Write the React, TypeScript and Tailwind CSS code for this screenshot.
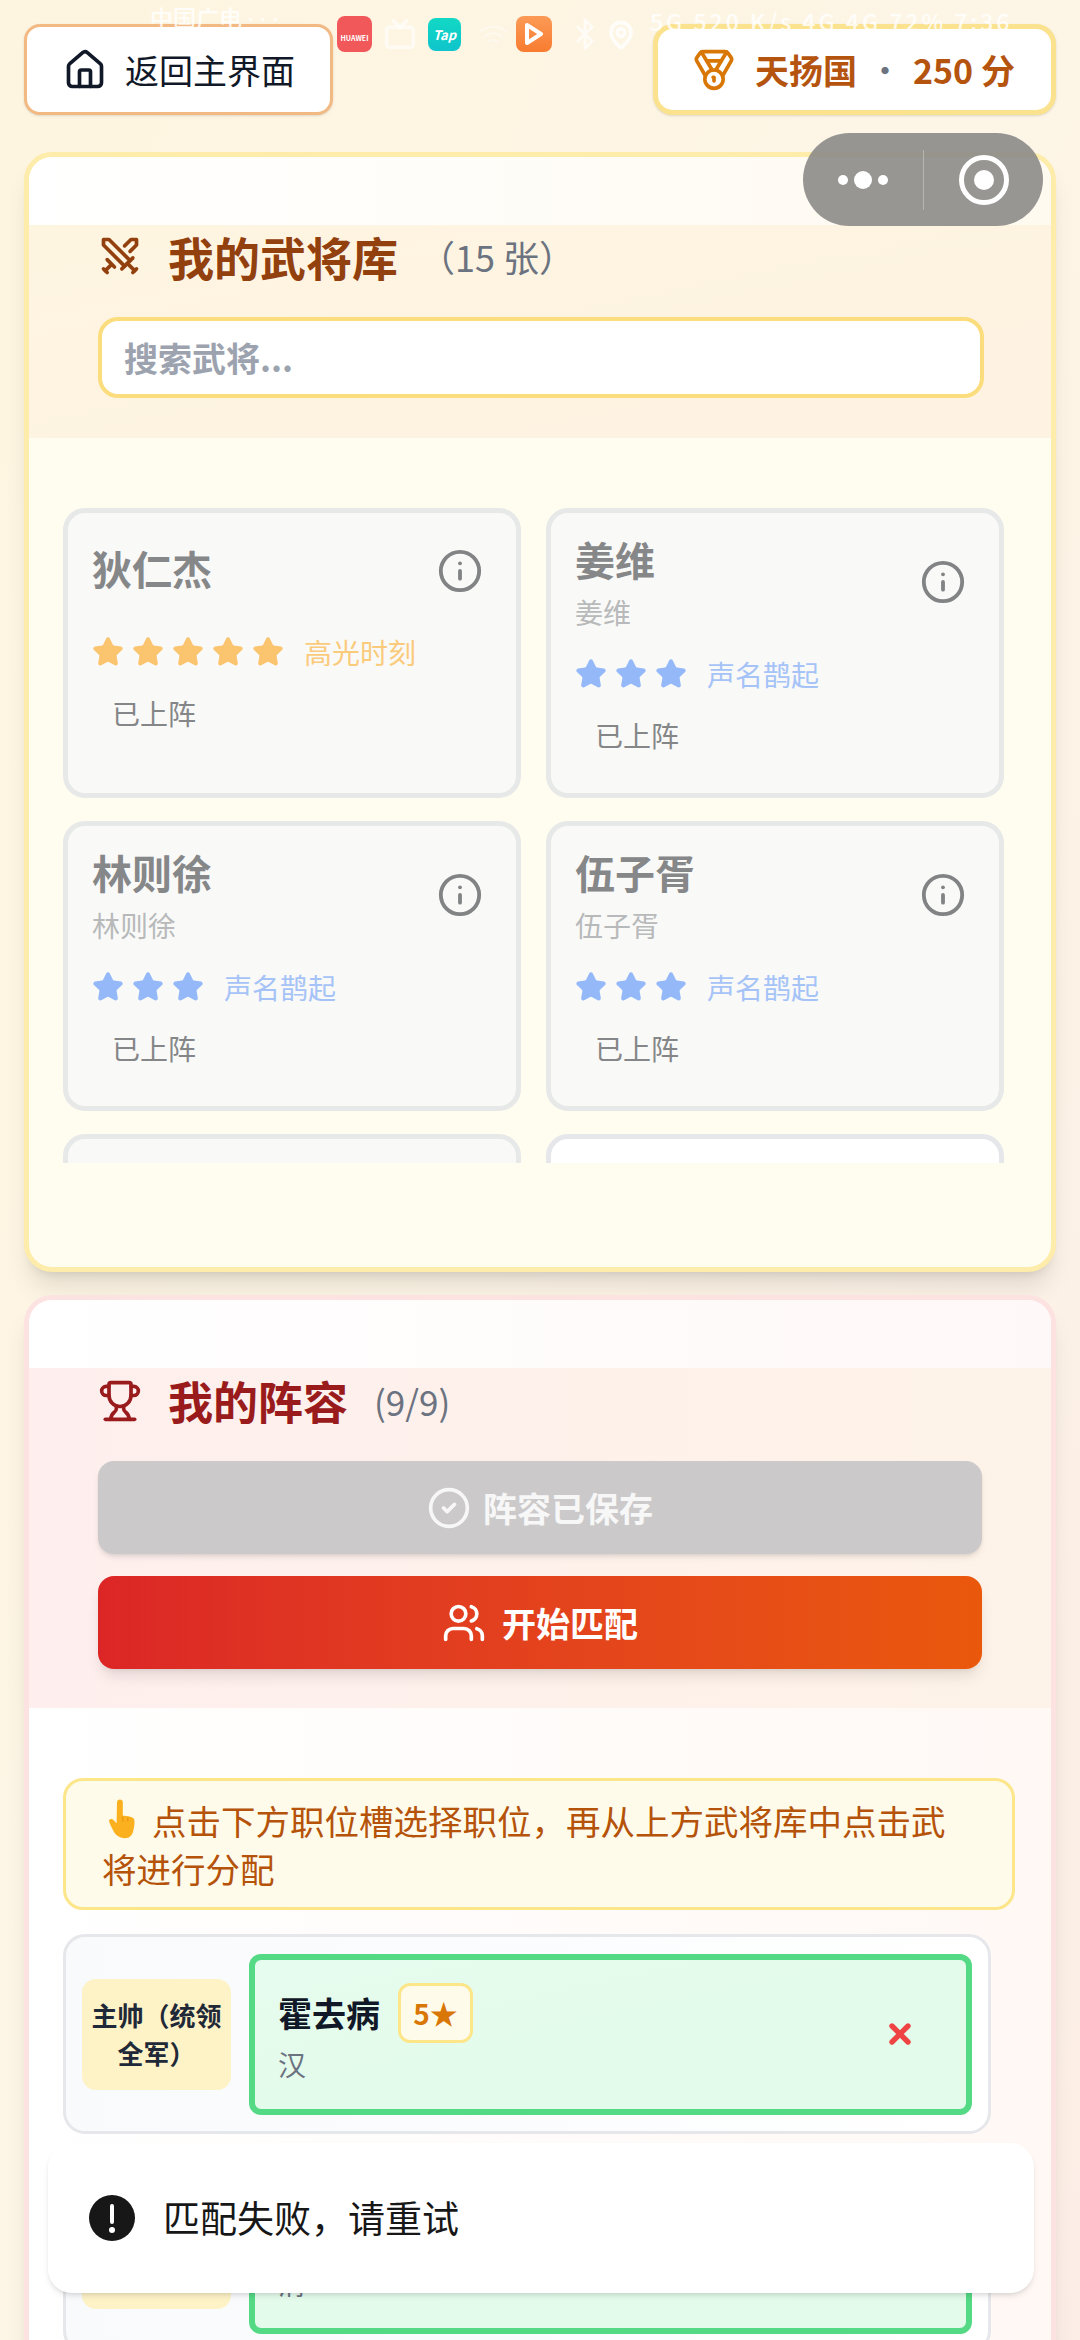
import { Home, Medal, Swords, Info, Star, Trophy, CircleCheck, Users, X, Tv, Wifi, Bluetooth, MapPin } from 'lucide-react'

const fontStack = { fontFamily: '"Noto Sans CJK SC", sans-serif' }

const heroes = [
  { name: '狄仁杰', sub: '', stars: 5, tier: '高光时刻' },
  { name: '姜维', sub: '姜维', stars: 3, tier: '声名鹊起' },
  { name: '林则徐', sub: '林则徐', stars: 3, tier: '声名鹊起' },
  { name: '伍子胥', sub: '伍子胥', stars: 3, tier: '声名鹊起' },
]

function HeroCard({ hero }: { hero: (typeof heroes)[number] }) {
  const gold = hero.stars === 5
  return (
    <div className="h-[290px] rounded-[22px] border-[5px] border-[#e7e8e8] bg-[#f9f9f8] pl-[24px] pr-[33px] pt-[20px]">
      <div className="flex items-center justify-between min-h-[76px]">
        <div>
          <div className="text-[40px] leading-[52px] pb-[6px] font-bold text-[#868788]">{hero.name}</div>
          {hero.sub && <div className="mt-[2px] text-[28px] leading-[38px] text-[#b8b9ba]">{hero.sub}</div>}
        </div>
        <Info size={46} strokeWidth={2} className="text-[#828384]" />
      </div>
      <div className="flex items-center mt-[23px] h-[40px]">
        <div className="flex gap-[8px]">
          {Array.from({ length: hero.stars }).map((_, i) => (
            <Star
              key={i}
              size={32}
              className={gold ? 'text-[#fbc56f] fill-[#fbc56f]' : 'text-[#95b9f8] fill-[#95b9f8]'}
            />
          ))}
        </div>
        <span className={`ml-[20px] text-[28px] leading-[40px] ${gold ? 'text-[#fbcb7c]' : 'text-[#a5c3f7]'}`}>{hero.tier}</span>
      </div>
      <div className="mt-[17px] pl-[20px] text-[28px] leading-[48px] text-[#858687]">已上阵</div>
    </div>
  )
}

function SlotCard({ label, name, sub }: { label?: string; name?: string; sub: string }) {
  return (
    <div className="w-[928px] h-[200px] rounded-[22px] border-[3px] border-[#e5e7eb] bg-gradient-to-r from-[#f8fafc] to-white flex items-center pl-[16px] pr-[16px] gap-[18px]">
      <div className="w-[149px] h-[111px] rounded-[14px] bg-[#fef3c7] flex items-center justify-center text-center text-[26px] leading-[38px] font-bold text-[#1f2937]">
        {label}
      </div>
      <div className="flex-1 h-[161px] rounded-[12px] border-[6px] border-[#54d985] bg-gradient-to-br from-[#e6fcee] to-[#e2fbea] pl-[23px] pr-[50px] flex items-center justify-between">
        <div>
          <div className="flex items-center gap-[18px] h-[60px]">
            {name && <span className="text-[34px] leading-[48px] font-bold text-[#111827]">{name}</span>}
            {name && (
              <span className="w-[75px] h-[60px] rounded-[12px] border-[3px] border-[#fde68a] bg-[#fffbeb] flex items-center justify-center text-[28px] font-bold text-[#d97706]">
                5★
              </span>
            )}
          </div>
          <div className="text-[28px] leading-[42px] text-[#6b7280]">{sub}</div>
        </div>
        {name && <X size={32} strokeWidth={4} className="text-[#ef4444]" />}
      </div>
    </div>
  )
}

function PointingHand() {
  return (
    <svg width="30" height="40" viewBox="0 0 34 48" className="inline-block align-[-4px] ml-[5px] mr-[15px]">
      <path d="M11 4c0-2 1.5-3.5 3.5-3.5S18 2 18 4v16c5 0 12 1 13.5 4 1 3 .5 9-1 14-1 5-4 9-10 9-7 0-12-4-15-11-2-4-4-8-4-10s3-3 5-1l4 4z" fill="#fbb11f" />
      <path d="M18 21v6M24 22v5" stroke="#e8930c" strokeWidth="1.4" fill="none" />
    </svg>
  )
}

function StatusBar() {
  return (
    <div className="absolute top-0 left-0 w-full h-[60px] pointer-events-none text-white/80 text-[23px] font-medium">
      <span className="absolute left-[150px] top-[2px] leading-[30px] whitespace-nowrap">中国广电 ⋅ ⋅ ⋅</span>
      <div className="absolute left-[337px] top-[16px] w-[35px] h-[36px] rounded-[8px] bg-[#f0585a] flex flex-col items-center justify-center">
        <span className="text-[7px] leading-[8px] mt-[8px] font-bold text-white">HUAWEI</span>
      </div>
      <Tv size={32} strokeWidth={3} className="absolute left-[384px] top-[18px] text-white/60" />
      <div className="absolute left-[428px] top-[18px] w-[33px] h-[33px] rounded-[8px] bg-gradient-to-b from-[#12d8c4] to-[#10c4cc] flex items-center justify-center text-[13px] font-bold italic text-white">Tap</div>
      <Wifi size={32} strokeWidth={1.5} className="absolute left-[477px] top-[20px] text-white/40" />
      <div className="absolute left-[516px] top-[16px] w-[36px] h-[36px] rounded-[8px] bg-gradient-to-b from-[#fb9a55] to-[#f87c2f] flex items-center justify-center">
        <svg width="18" height="22" viewBox="0 0 18 22"><path d="M2 2l14 9-14 9z" fill="none" stroke="#fff" strokeWidth="4" strokeLinejoin="round" /></svg>
      </div>
      <Bluetooth size={34} strokeWidth={2} className="absolute left-[568px] top-[17px] text-white/70" />
      <MapPin size={30} strokeWidth={3} className="absolute left-[606px] top-[20px] text-white/80" />
      <span className="absolute left-[650px] top-[6px] leading-[30px] tracking-[3px] whitespace-nowrap">5G 520 K/s 4G 4G 72% 7:36</span>
    </div>
  )
}

export default function App() {
  return (
    <div className="relative w-[1080px] h-[2340px] overflow-hidden bg-gradient-to-br from-[#fef5e0] via-[#fdf5e6] to-[#fceee6]" style={fontStack}>
      <div className="pt-[24px] px-[24px]">
        <div className="flex items-center justify-between">
          <button className="w-[309px] h-[91px] rounded-[16px] border-[3px] border-[#f3b983] bg-white flex items-center pl-[36px] gap-[18px] text-[34px] text-[#111827] shadow-sm">
            <Home size={44} strokeWidth={2} />
            <span>返回主界面</span>
          </button>
          <div className="w-[403px] h-[91px] rounded-[20px] border-[5px] border-[#fbe28f] bg-white flex items-center pl-[34px] text-[34px] font-bold text-[#b4540f] shadow-sm">
            <Medal size={44} strokeWidth={2} className="text-[#d97706]" />
            <span className="ml-[19px]">天扬国</span>
            <span className="mx-[11px] text-[#6b7280] font-normal">·</span>
            <span>250 分</span>
          </div>
        </div>

        <section className="mt-[37px] h-[1120px] rounded-[28px] border-[5px] border-[#fdecaa] bg-[#fffcf0] shadow-xl overflow-hidden">
          <div className="h-[68px] bg-gradient-to-r from-white to-[#fffaf0]" />
          <div className="h-[213px] bg-gradient-to-br from-[#fef5e1] to-[#fef2e2] pl-[69px] pr-[67px]">
            <div className="flex items-center h-[62px]">
              <Swords size={44} strokeWidth={2} className="text-[#92400e]" />
              <h2 className="ml-[26px] text-[46px] font-bold text-[#92400e]">我的武将库</h2>
              <span className="ml-[21px] text-[36px] text-[#6b7280]">（15 张）</span>
            </div>
            <div className="mt-[30px] h-[81px] rounded-[20px] border-[4px] border-[#fbdd7e] bg-white flex items-center pl-[22px] text-[34px] font-semibold text-[#9ca3af]">
              搜索武将...
            </div>
          </div>
          <div className="pt-[70px] px-[34px] pr-[47px]">
            <div className="h-[655px] overflow-hidden grid grid-cols-2 gap-x-[25px] gap-y-[23px] content-start">
              {heroes.map(h => (
                <HeroCard key={h.name} hero={h} />
              ))}
              <div className="h-[120px] rounded-[22px] border-[5px] border-[#e7e8e8] bg-[#f9f9f8]" />
              <div className="h-[120px] rounded-[22px] border-[5px] border-[#e5e7eb] bg-white" />
            </div>
          </div>
        </section>

        <section className="mt-[23px] rounded-[28px] border-[5px] border-[#fde2e2] bg-[#fffafa] shadow-xl h-[1100px] overflow-hidden">
          <div className="h-[68px] bg-gradient-to-r from-white to-[#fff8f8]" />
          <div className="h-[340px] bg-gradient-to-r from-[#feefee] to-[#fef3e8] pl-[69px] pr-[69px]">
            <div className="flex items-center h-[66px]">
              <Trophy size={44} strokeWidth={2} className="text-[#991b1b]" />
              <h2 className="ml-[26px] text-[45px] font-bold text-[#991b1b]">我的阵容</h2>
              <span className="ml-[26px] text-[35px] text-[#6b7280]">(9/9)</span>
            </div>
            <button className="mt-[27px] w-full h-[93px] rounded-[16px] bg-[#cbc9ca] flex items-center justify-center gap-[12px] text-[34px] font-bold text-white/85 shadow-md">
              <CircleCheck size={44} strokeWidth={2} />
              阵容已保存
            </button>
            <button className="mt-[22px] w-full h-[93px] rounded-[16px] bg-gradient-to-r from-[#dc2626] to-[#ea580c] flex items-center justify-center gap-[16px] text-[34px] font-bold text-white shadow-lg">
              <Users size={44} strokeWidth={2} />
              开始匹配
            </button>
          </div>
          <div className="pt-[70px] pl-[34px] pr-[34px] bg-gradient-to-r from-white to-[#fff8f5] h-[700px]">
            <div className="w-[952px] h-[132px] rounded-[20px] border-[3px] border-[#fde68a] bg-[#fffbeb] px-[36px] py-[15px] text-[34.5px] leading-[48px] text-[#b45309]">
              <PointingHand />
              点击下方职位槽选择职位，再从上方武将库中点击武将进行分配
            </div>
            <div className="mt-[24px] flex flex-col gap-[19px]">
              <SlotCard label="主帅（统领全军）" name="霍去病" sub="汉" />
              <SlotCard sub="清" />
            </div>
          </div>
        </section>
      </div>

      <StatusBar />

      {/* capsule */}
      <div className="absolute left-[803px] top-[133px] w-[240px] h-[93px] rounded-full bg-[#8c8b88]/90 flex items-center">
        <div className="w-[120px] flex items-center justify-center gap-[6px]">
          <div className="w-[10px] h-[10px] rounded-full bg-white" />
          <div className="w-[18px] h-[18px] rounded-full bg-white" />
          <div className="w-[10px] h-[10px] rounded-full bg-white" />
        </div>
        <div className="w-px h-[60px] bg-white/30" />
        <div className="flex-1 flex items-center justify-center">
          <div className="w-[50px] h-[50px] rounded-full border-[5px] border-white flex items-center justify-center">
            <div className="w-[20px] h-[20px] rounded-full bg-white" />
          </div>
        </div>
      </div>

      {/* toast */}
      <div className="absolute left-[48px] top-[2143px] w-[986px] h-[150px] rounded-[24px] bg-white shadow-md flex items-center pl-[41px] gap-[28px] text-[37px] text-[#171717]">
        <svg width="46" height="46" viewBox="0 0 46 46">
          <circle cx="23" cy="23" r="23" fill="#171717" />
          <rect x="21" y="9" width="4" height="20" rx="2" fill="#fff" />
          <circle cx="23" cy="35" r="3" fill="#fff" />
        </svg>
        <span>匹配失败，请重试</span>
      </div>
    </div>
  )
}
